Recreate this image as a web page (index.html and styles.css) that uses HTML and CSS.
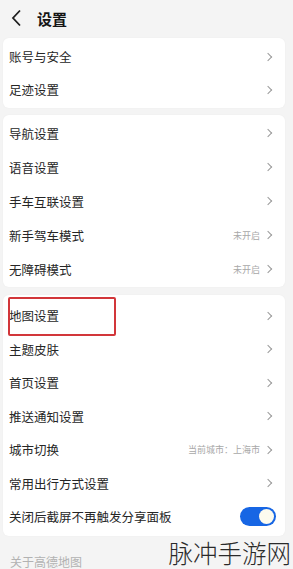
FILE: index.html
```html
<!DOCTYPE html>
<html lang="zh-CN">

<head>
    <meta charset="UTF-8">
    <meta name="viewport" content="width=device-width, initial-scale=1.0">
    <title>设置</title>
    <link rel="stylesheet" href="styles.css">
</head>

<body>
    <div class="header">
        <svg class="back" width="12" height="18" viewBox="0 0 12 18">
            <polyline points="9,1.5 2,9 9,16.5" fill="none" stroke="#1e1e1e" stroke-width="1.8" />
        </svg>
        <h1>设置</h1>
    </div>

    <div class="card card-first">
        <div class="row"><span class="label">账号与安全</span><span class="arrow"></span></div>
        <div class="row"><span class="label">足迹设置</span><span class="arrow"></span></div>
    </div>

    <div class="card card-second">
        <div class="row"><span class="label">导航设置</span><span class="arrow"></span></div>
        <div class="row"><span class="label">语音设置</span><span class="arrow"></span></div>
        <div class="row"><span class="label">手车互联设置</span><span class="arrow"></span></div>
        <div class="row"><span class="label">新手驾车模式</span><span class="value">未开启</span><span class="arrow"></span></div>
        <div class="row"><span class="label">无障碍模式</span><span class="value">未开启</span><span class="arrow"></span></div>
    </div>

    <div class="card card-third">
        <div class="row"><span class="label">地图设置</span><span class="arrow"></span><span class="mark"></span></div>
        <div class="row"><span class="label">主题皮肤</span><span class="arrow"></span></div>
        <div class="row"><span class="label">首页设置</span><span class="arrow"></span></div>
        <div class="row"><span class="label">推送通知设置</span><span class="arrow"></span></div>
        <div class="row"><span class="label">城市切换</span><span class="value">当前城市：上海市</span><span class="arrow"></span></div>
        <div class="row"><span class="label">常用出行方式设置</span><span class="arrow"></span></div>
        <div class="row"><span class="label">关闭后截屏不再触发分享面板</span><span class="toggle"><span class="knob"></span></span></div>
    </div>

    <div class="about">关于高德地图</div>

    <div class="watermark">脉冲手游网</div>
</body>

</html>
```

FILE: styles.css
```css
body {
    margin: 0;
    height: 569px;
    overflow: hidden;
    background-color: #f4f4f4;
    font-family: "Noto Sans CJK SC", sans-serif;
    color: #262626;
    position: relative;
}

.header {
    height: 38px;
    display: flex;
    align-items: center;
    padding-left: 11px;
    box-sizing: border-box;
    padding-bottom: 2px;
}

.header h1 {
    margin: 0 0 0 14px;
    font-size: 15px;
    font-weight: bold;
    color: #151515;
}

.card {
    background: #fff;
    border-radius: 6px;
    margin: 0 8px 0 3px;
    box-shadow: 0 0 2px rgba(0, 0, 0, 0.04);
}

.card-first {
    padding: 2px 0;
}

.card-first .row {
    height: 33px;
}

.card-second {
    margin-top: 7px;
    padding: 1px 0;
}

.card-second .row {
    height: 34px;
}

.card-third {
    margin-top: 8px;
    padding: 4px 0 2px;
}

.card-third .row {
    height: 33.5px;
}

.row {
    position: relative;
    display: flex;
    align-items: center;
    padding: 0 13px 0 6px;
    font-size: 12.5px;
}

.label {
    flex: 1;
}

.value {
    font-size: 9px;
    color: #a8a8a8;
    margin-right: 5px;
}

.arrow {
    width: 5px;
    height: 5px;
    border-top: 1.2px solid #9a9a9a;
    border-right: 1.2px solid #9a9a9a;
    transform: rotate(45deg);
    margin-right: 1px;
}

.toggle {
    width: 36px;
    height: 19px;
    border-radius: 10px;
    background: #1766e4;
    margin-right: -4px;
    display: flex;
    align-items: center;
    justify-content: flex-end;
    padding-right: 2px;
    box-sizing: border-box;
}

.knob {
    width: 15px;
    height: 15px;
    border-radius: 50%;
    background: #fdfbee;
}

.mark {
    position: absolute;
    left: 5px;
    top: -2px;
    width: 108px;
    height: 39px;
    border: 2px solid #d2363a;
    border-radius: 2px;
    box-sizing: border-box;
}

.about {
    margin: 17px 0 0 10px;
    font-size: 12px;
    color: #b2b2b2;
}

.watermark {
    position: absolute;
    right: 2px;
    bottom: 1px;
    line-height: 30px;
    font-size: 24.5px;
    font-weight: 300;
    color: #2a2a2a;
}
```
